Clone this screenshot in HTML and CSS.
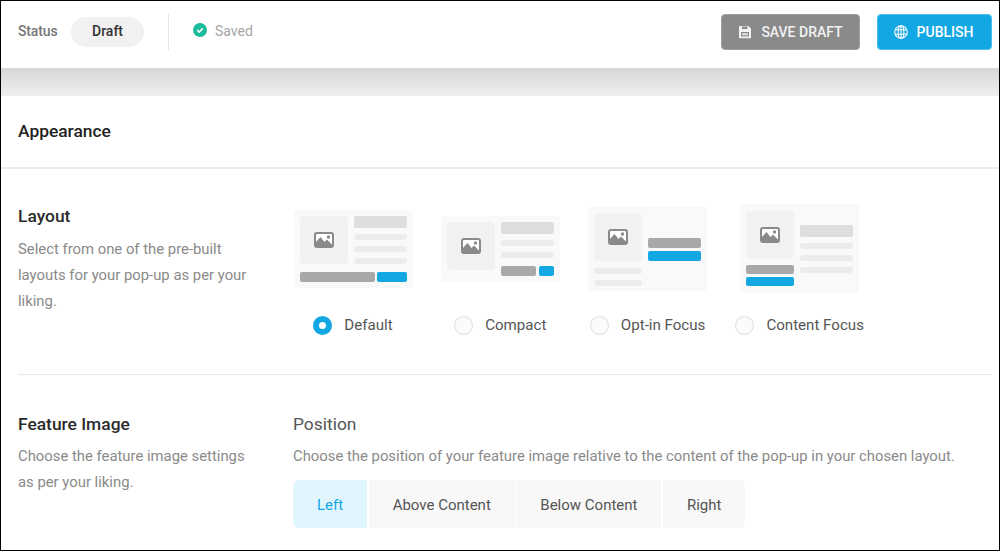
FILE: index.html
```html
<!DOCTYPE html>
<html lang="en">
<head>
<meta charset="utf-8">
<title>Appearance</title>
<link rel="stylesheet" href="styles.css">
</head>
<body>
<div class="frame">
  <header class="topbar">
    <div class="status">
      <span class="status-label">Status</span>
      <span class="pill">Draft</span>
      <span class="vline"></span>
      <svg class="check" viewBox="0 0 14 14" width="14" height="14"><circle cx="7" cy="7" r="7" fill="#1abc9c"/><path d="M4.2 7.2l2 1.9 3.6-3.7" fill="none" stroke="#fff" stroke-width="1.6"/></svg>
      <span class="saved">Saved</span>
    </div>
    <div class="actions">
      <button class="btn btn-grey"><svg viewBox="0 0 14 14" width="14" height="14"><path fill="#f2f2f2" fill-rule="evenodd" d="M1.5 1H10.4L13 3.6v8.9a.8.8 0 0 1-.8.8H1.8a.8.8 0 0 1-.8-.8V1.5a.5.5 0 0 1 .5-.5zM4 1.4v2.6h5.4V1.4zM3 7v4.6h8V7z"/><rect x="4" y="8" width="6" height="2.4" fill="#d8d8d8"/></svg>SAVE DRAFT</button>
      <button class="btn btn-blue"><svg viewBox="0 0 14 14" width="14" height="14" fill="none" stroke="#fff" stroke-width="1.1"><circle cx="7" cy="7" r="6.3"/><ellipse cx="7" cy="7" rx="2.9" ry="6.3"/><path d="M7 .7v12.6M1.2 4.8h11.6M1.2 9.2h11.6"/></svg>PUBLISH</button>
    </div>
  </header>
  <div class="band"></div>
  <section class="appearance"><h1>Appearance</h1></section>
  <section class="row row-layout">
    <div class="info">
      <h2>Layout</h2>
      <p>Select from one of the pre-built layouts for your pop-up as per your liking.</p>
    </div>
    <div class="options">
      <div class="option">
        <div class="slot">
          <div class="card">
            <div class="split">
              <div class="thumb"><svg class="pic" viewBox="0 0 20 16"><use href="#pic"/></svg></div>
              <div class="col"><i class="title"></i><i class="line"></i><i class="line"></i><i class="line"></i></div>
            </div>
            <div class="btns"><i class="b-grey grow"></i><i class="b-blue w30"></i></div>
          </div>
        </div>
        <label class="radio"><span class="dot on"></span>Default</label>
      </div>
      <div class="option">
        <div class="slot">
          <div class="card">
            <div class="split">
              <div class="thumb"><svg class="pic" viewBox="0 0 20 16"><use href="#pic"/></svg></div>
              <div class="col"><i class="title"></i><i class="line"></i><i class="line"></i>
                <div class="btns tight"><i class="b-grey grow"></i><i class="b-blue w15"></i></div>
              </div>
            </div>
          </div>
        </div>
        <label class="radio"><span class="dot"></span>Compact</label>
      </div>
      <div class="option">
        <div class="slot">
          <div class="card card-optin">
            <div class="split">
              <div class="stack">
                <div class="thumb"><svg class="pic" viewBox="0 0 20 16"><use href="#pic"/></svg></div>
                <div class="lines"><i class="line"></i><i class="line"></i></div>
              </div>
              <div class="col cta"><i class="b-grey"></i><i class="b-blue"></i></div>
            </div>
          </div>
        </div>
        <label class="radio"><span class="dot"></span>Opt-in Focus</label>
      </div>
      <div class="option">
        <div class="slot">
          <div class="card card-content">
            <div class="split center">
              <div class="stack">
                <div class="thumb"><svg class="pic" viewBox="0 0 20 16"><use href="#pic"/></svg></div>
                <div class="cta-under"><i class="b-grey"></i><i class="b-blue"></i></div>
              </div>
              <div class="col"><i class="title"></i><i class="line"></i><i class="line"></i><i class="line"></i></div>
            </div>
          </div>
        </div>
        <label class="radio"><span class="dot"></span>Content Focus</label>
      </div>
    </div>
  </section>
  <section class="row row-feature">
    <div class="info">
      <h2>Feature Image</h2>
      <p>Choose the feature image settings as per your liking.</p>
    </div>
    <div class="position">
      <h2 class="regular">Position</h2>
      <p>Choose the position of your feature image relative to the content of the pop-up in your chosen layout.</p>
      <div class="tabs">
        <span class="tab active">Left</span>
        <span class="tab">Above Content</span>
        <span class="tab">Below Content</span>
        <span class="tab">Right</span>
      </div>
    </div>
  </section>
</div>
<svg class="defs" width="0" height="0">
  <symbol id="pic" viewBox="0 0 20 16">
    <rect x="1" y="1" width="18" height="14" rx="2" fill="#fff" stroke="#8a8a8a" stroke-width="2"/>
    <path d="M1.5 14.5V10.5l5-5.5 4 5 2.5-2.5 5.5 5.5v1.5z" fill="#8a8a8a"/>
    <circle cx="14.5" cy="5" r="1.7" fill="#8a8a8a"/>
  </symbol>
</svg>
</body>
</html>
```
FILE: styles.css
```css
* { box-sizing: border-box; }
html, body { margin: 0; padding: 0; }
body { width: 1000px; height: 551px; overflow: hidden; font-family: Roboto, "Liberation Sans", sans-serif; color: #555; background: #fff; }
.defs { position: absolute; }
.frame { width: 1000px; height: 551px; border: 1px solid #000; overflow: hidden; background: #fff; }

.topbar { height: 67px; display: flex; justify-content: space-between; padding: 13px 7px 0 17px; }
.status { display: flex; align-items: flex-start; font-size: 14px; }
.status-label { margin-top: 9px; color: #777; font-weight: 500; width: 40px; letter-spacing: -0.01em; }
.pill { margin: 3px 0 0 13px; width: 73px; height: 30px; border-radius: 15px; background: #f1f1f1; color: #333; font-weight: 500; text-align: center; line-height: 28px; }
.vline { width: 1px; height: 36px; margin-left: 24px; background: #e6e6e6; }
.check { margin: 9px 0 0 24px; }
.saved { margin: 9px 0 0 8px; color: #a5a5a5; }
.actions { display: flex; gap: 17px; }
.btn { height: 36px; border: 1px solid transparent; border-radius: 4px; font: 500 14px Roboto, sans-serif; color: #fff; display: flex; align-items: center; justify-content: center; gap: 9px; padding: 0; }
.btn-grey { width: 139px; background: #8a8a8a; border-color: #a0a0a0; color: #f2f2f2; }
.btn-blue { width: 115px; background: #13a7e3; border-color: #4cbcea; padding-right: 2px; }

.band { height: 28px; background: linear-gradient(#d6d6d6, #f0f0f0); }
.appearance { height: 73px; border-bottom: 2px solid #ececec; display: flex; align-items: center; padding: 0 0 2px 17px; }
h1 { margin: 0; font-size: 17.4px; font-weight: 500; color: #222; }
h2 { margin: 0; font-size: 17.4px; font-weight: 500; line-height: 20px; color: #2a2a2a; }
h2.regular { font-weight: 400; color: #555; }
p { margin: 0; font-size: 14.85px; line-height: 26px; color: #8a8a8a; }

.row { margin-left: 17px; margin-right: 7px; display: grid; grid-template-columns: 275px 1fr; }
.row-layout { height: 206px; border-bottom: 1px solid #e8e8e8; padding-top: 36px; }
.row-feature { padding-top: 38px; }
.info h2 { margin-top: 1px; }
.info p { margin-top: 10px; width: 235px; }
.row-feature .info p { margin-top: 9px; }

.options { display: flex; gap: 28.3px; margin-top: -1px; padding-left: 0.5px; }
.option { display: flex; flex-direction: column; align-items: center; }
.slot { height: 89px; width: 119px; display: flex; align-items: center; }
.card { width: 119px; background: #f9f9f9; border-radius: 4px; padding: 6px; display: flex; flex-direction: column; gap: 8px; }
.card-optin { padding-bottom: 5px; }
.card-content { padding: 7px 6px; }
.card-content .b-grey, .card-content .b-blue { height: 9px; }
.split { display: flex; gap: 6px; }
.split.center { align-items: center; }
.thumb { width: 48px; height: 48px; background: #f1f1f1; border-radius: 4px; display: flex; align-items: center; justify-content: center; flex: none; }
.pic { width: 20px; height: 16px; }
.col { width: 54px; display: flex; flex-direction: column; gap: 6px; }
.stack { width: 48px; display: flex; flex-direction: column; }
.lines { margin-top: 7px; display: flex; flex-direction: column; gap: 6px; }
.cta { justify-content: flex-end; gap: 3px; height: 48px; }
.cta-under { margin-top: 6px; display: flex; flex-direction: column; gap: 3px; }
i { display: block; border-radius: 2px; }
.title { height: 12px; background: #dedede; }
.line { height: 6px; background: #ececec; border-radius: 3px; }
.b-grey { height: 10px; background: #a8a8a8; }
.b-blue { height: 10px; background: #13a7e3; }
.btns { display: flex; gap: 2px; }
.btns.tight { margin-top: 2px; gap: 3px; }
.grow { flex: 1; }
.w30 { width: 30px; }
.w15 { width: 15px; }

.radio { margin-top: 22px; display: flex; align-items: center; gap: 12px; font-size: 15.1px; color: #555; line-height: 20px; white-space: nowrap; }
.dot { width: 19px; height: 19px; border-radius: 50%; border: 1px solid #ddd; background: #fbfbfb; flex: none; }
.dot.on { border: 6.5px solid #13a7e3; background: #fff; }

.position h2 { margin-top: 1px; }
.position p { margin-top: 9px; white-space: nowrap; }
.tabs { margin-top: 11px; display: inline-flex; gap: 1.5px; border-radius: 6px; overflow: hidden; }
.tab { height: 48px; display: flex; align-items: center; padding: 1px 24px 0; background: #f8f8f8; font-size: 15px; color: #555; }
.tab.active { background: #e1f5fe; color: #13a7e3; }
```
